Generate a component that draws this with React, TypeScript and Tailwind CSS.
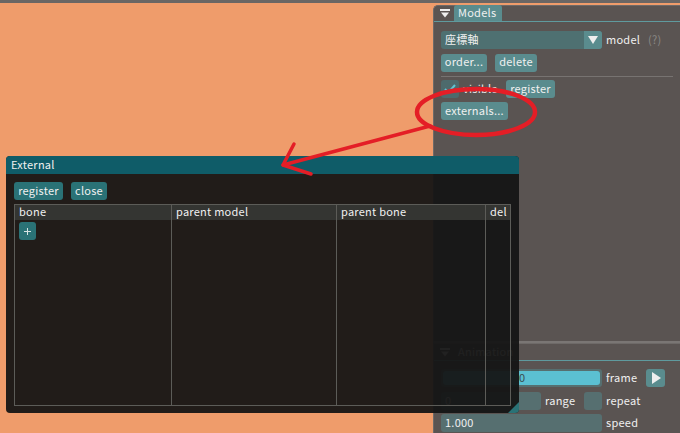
const font = { fontFamily: '"Noto Sans CJK JP", "Noto Sans", sans-serif' };

const Btn = ({ label, className = "" }: { label: string; className?: string }) => (
    <div className={`flex h-[18px] items-center justify-center rounded-[3px] bg-[#5a8c8e] pb-[2px] text-[11px] tracking-[0.25px] text-[#f0f0f0] ${className}`}>
        {label}
    </div>
);

const TealBtn = ({ label, className = "" }: { label: string; className?: string }) => (
    <div className={`flex h-[18px] items-center justify-center rounded-[3px] bg-[#2a7276] pb-[2px] text-[11px] tracking-[0.25px] text-[#f0f0f0] ${className}`}>
        {label}
    </div>
);

const Triangle = ({ className = "" }: { className?: string }) => (
    <svg width="10" height="9" viewBox="0 0 10 9" className={className}>
        <rect x="0" y="0" width="10" height="2" fill="#eeeeee" />
        <path d="M1 3.5H9L5 8.5Z" fill="#eeeeee" />
    </svg>
);

function ModelsPanel() {
    return (
        <div className="absolute left-[433px] top-[5px] h-[336px] w-[247px] rounded-tl-[5px] border-l border-t border-[#6e6a68] bg-[#5a5452] text-[11px] tracking-[0.25px] text-[#f0f0f0]">
            <div className="flex h-[16px] items-end border-b border-[#5f9a9e] pl-[5px]">
                <Triangle className="mb-[3px] ml-[1px]" />
                <div className="ml-[4px] flex h-[16px] w-[48px] items-center rounded-t-[3px] bg-[#5a8c8e] pb-[2px] pl-1">
                    Models
                </div>
            </div>
            <div className="px-[7px] pt-[9px]">
                <div className="flex items-center">
                    <div className="flex h-[18px] w-[161px] items-center overflow-hidden rounded-[3px] bg-[#4e7071]">
                        <span className="flex-1 pb-[2px] pl-1">座標軸</span>
                        <div className="flex h-[18px] w-[18px] items-center justify-center bg-[#5a8c8e]">
                            <svg width="10" height="8" viewBox="0 0 10 8"><path d="M0 0H10L5 8Z" fill="#eeeeee" /></svg>
                        </div>
                    </div>
                    <span className="ml-1 w-[42px] pb-[2px]">model</span>
                    <span className="pb-[2px] text-[#8a8886]">(?)</span>
                </div>
                <div className="mt-1 flex gap-2">
                    <Btn label="order..." className="w-[46px]" />
                    <Btn label="delete" className="w-[42px]" />
                </div>
                <div className="mt-1 h-px w-[232px] bg-[#777371]" />
                <div className="mt-[3px] flex items-center">
                    <div className="flex h-[18px] w-[18px] items-center justify-center rounded-[3px] bg-[#4d6a6c]">
                        <svg width="12" height="10" viewBox="0 0 12 10"><path d="M1 5L4.5 8.5L11 1" stroke="#5fc4d4" strokeWidth="2" fill="none" /></svg>
                    </div>
                    <span className="ml-1 w-[43px] pb-[2px]">visible</span>
                    <Btn label="register" className="w-[49px]" />
                </div>
                <Btn label="externals..." className="mt-1 w-[67px]" />
            </div>
        </div>
    );
}

function AnimationPanel() {
    return (
        <div className="absolute left-[433px] top-[343px] h-[90px] w-[247px] border-l border-t border-[#6e6a68] bg-[#5a5452] text-[11px] tracking-[0.25px] text-[#f0f0f0]">
            <div className="flex h-[17px] items-end border-b border-[#5f9a9e] pl-[5px]">
                <Triangle className="mb-[3px] ml-[1px]" />
                <div className="ml-[4px] flex h-[16px] items-center px-1 pb-[2px]">Animation</div>
            </div>
            <div className="flex flex-col gap-1 px-[7px] pt-[8px]">
                <div className="flex items-center">
                    <div className="relative flex h-[18px] w-[161px] items-center justify-center rounded-[3px] bg-[#566f70] p-0.5">
                        <div className="h-full w-full rounded-[3px] bg-[#5bc0d2]" />
                        <span className="absolute inset-0 pl-[78px] leading-[17px] text-[#3c4d50]">0</span>
                    </div>
                    <span className="ml-1 w-[40px] pb-[2px]">frame</span>
                    <div className="flex h-[18px] w-[19px] items-center justify-center rounded-[3px] bg-[#5a8c8e]">
                        <svg width="10" height="12" viewBox="0 0 10 12"><path d="M1 0L10 6L1 12Z" fill="#eeeeee" /></svg>
                    </div>
                </div>
                <div className="flex items-center">
                    <div className="flex h-[18px] w-[100px] items-center rounded-[3px] bg-[#566f70] pb-[2px] pl-1">
                        0
                    </div>
                    <span className="ml-1 w-[39px] pb-[2px]">range</span>
                    <div className="h-[18px] w-[18px] rounded-[3px] bg-[#566f70]" />
                    <span className="ml-1 pb-[2px]">repeat</span>
                </div>
                <div className="flex items-center">
                    <div className="flex h-[18px] w-[161px] items-center rounded-[3px] bg-[#566f70] pb-[2px] pl-1">
                        1.000
                    </div>
                    <span className="ml-1 pb-[2px]">speed</span>
                </div>
            </div>
        </div>
    );
}

function ExternalWindow() {
    const headCell = "border-r border-[#5c5c58] pl-1 leading-[13px] last:border-r-0";
    return (
        <div className="absolute left-[6px] top-[156px] flex h-[257px] w-[513px] flex-col overflow-hidden rounded-[4px] bg-[#151515]/95 text-[11px] tracking-[0.25px] text-[#f0f0f0]">
            <div className="flex h-[18px] items-center bg-[#0f5c68] pb-[2px] pl-[5px]">External</div>
            <div className="flex gap-2 px-2 pt-2">
                <TealBtn label="register" className="w-[49px]" />
                <TealBtn label="close" className="w-[36px]" />
            </div>
            <div className="mx-2 mt-1 flex h-[202px] w-[497px] flex-col border border-[#5c5c58]">
                <div className="grid h-[15px] grid-cols-[157px_165px_149px_1fr] bg-[#343532]">
                    <div className={headCell}>bone</div>
                    <div className={headCell}>parent model</div>
                    <div className={headCell}>parent bone</div>
                    <div className={headCell}>del</div>
                </div>
                <div className="grid flex-1 grid-cols-[157px_165px_149px_1fr]">
                    <div className="border-r border-[#5c5c58] pl-1 pt-[2px]">
                        <div className="flex h-[18px] w-[17px] items-center justify-center rounded-[3px] bg-[#2a7276]">
                            <svg width="9" height="9" viewBox="0 0 9 9"><path d="M4.5 1V8M1 4.5H8" stroke="#d8e4e4" strokeWidth="1" /></svg>
                        </div>
                    </div>
                    <div className="border-r border-[#5c5c58]" />
                    <div className="border-r border-[#5c5c58]" />
                    <div />
                </div>
            </div>
            <div className="absolute bottom-0 right-0 h-[11px] w-[11px] bg-[#2a7276] [clip-path:polygon(100%_0,100%_100%,0_100%)]" />
        </div>
    );
}

export default function App() {
    return (
        <div className="relative h-[433px] w-[680px] overflow-hidden bg-[#ef9c6b]" style={font}>
            <div className="h-[3px] bg-[#6a6664]" />
            <ModelsPanel />
            <div className="absolute left-[433px] top-[341px] h-[2px] w-[247px] bg-[#7a7674]" />
            <AnimationPanel />
            <ExternalWindow />
            {/* red marker drawn on the screenshot */}
            <svg className="absolute left-0 top-0" width="680" height="433" viewBox="0 0 680 433" fill="none" stroke="#e41e26" strokeLinecap="round" strokeLinejoin="round">
                <ellipse cx="476" cy="112" rx="59" ry="23" strokeWidth="4.5" />
                <path d="M430 126L283 165" strokeWidth="3.5" />
                <path d="M294 144L283 165L311 174" strokeWidth="3.5" />
            </svg>
        </div>
    );
}
